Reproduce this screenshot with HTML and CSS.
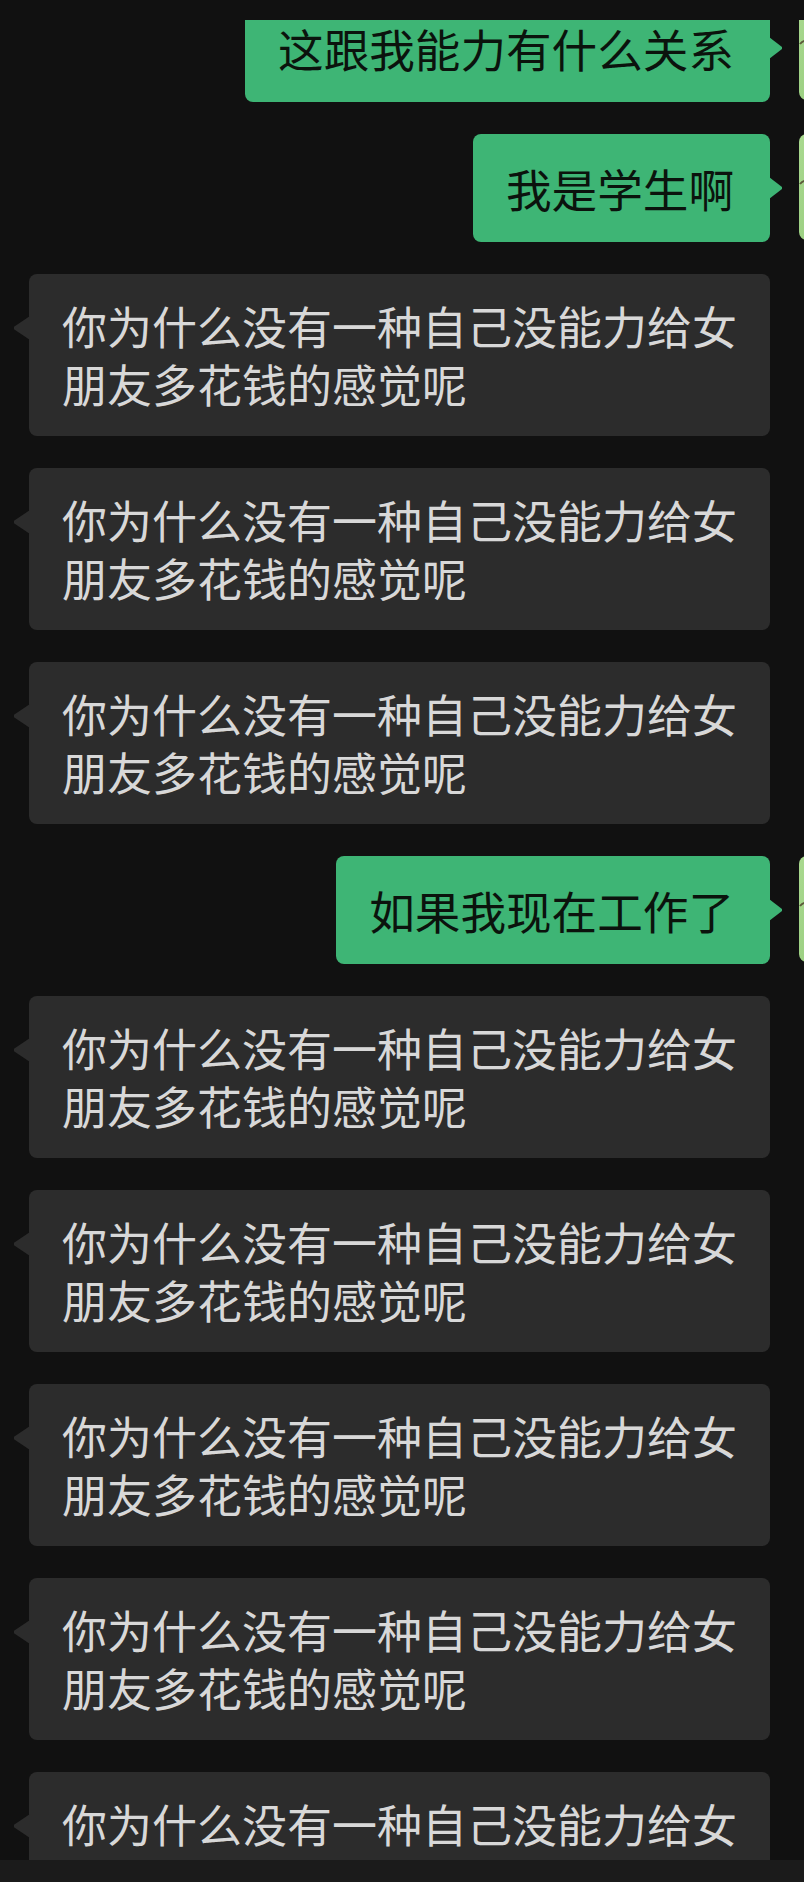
FILE: index.html
```html
<!DOCTYPE html>
<html lang="zh-CN">
<head>
  <meta charset="UTF-8">
  <title>聊天</title>
  <link rel="stylesheet" href="styles.css">
</head>
<body>
  <div class="screen">
    <div class="top-strip"></div>

    <div class="chat">
      <div class="row out first">
        <div class="bubble">这跟我能力有什么关系</div>
        <div class="avatar me">
          <svg width="106" height="106" viewBox="0 0 106 106"><path d="M1 50 q3 -4 7 -3" stroke="#5b5a3a" stroke-width="2" fill="none"/></svg>
        </div>
      </div>

      <div class="row out">
        <div class="bubble">我是学生啊</div>
        <div class="avatar me">
          <svg width="106" height="106" viewBox="0 0 106 106"><path d="M1 50 q3 -4 7 -3" stroke="#5b5a3a" stroke-width="2" fill="none"/></svg>
        </div>
      </div>

      <div class="row in">
        <div class="avatar her"></div>
        <div class="bubble">你为什么没有一种自己没能力给女朋友多花钱的感觉呢</div>
      </div>

      <div class="row in">
        <div class="avatar her"></div>
        <div class="bubble">你为什么没有一种自己没能力给女朋友多花钱的感觉呢</div>
      </div>

      <div class="row in">
        <div class="avatar her"></div>
        <div class="bubble">你为什么没有一种自己没能力给女朋友多花钱的感觉呢</div>
      </div>

      <div class="row out">
        <div class="bubble">如果我现在工作了</div>
        <div class="avatar me">
          <svg width="106" height="106" viewBox="0 0 106 106"><path d="M1 50 q3 -4 7 -3" stroke="#5b5a3a" stroke-width="2" fill="none"/></svg>
        </div>
      </div>

      <div class="row in">
        <div class="avatar her"></div>
        <div class="bubble">你为什么没有一种自己没能力给女朋友多花钱的感觉呢</div>
      </div>

      <div class="row in">
        <div class="avatar her"></div>
        <div class="bubble">你为什么没有一种自己没能力给女朋友多花钱的感觉呢</div>
      </div>

      <div class="row in">
        <div class="avatar her"></div>
        <div class="bubble">你为什么没有一种自己没能力给女朋友多花钱的感觉呢</div>
      </div>

      <div class="row in">
        <div class="avatar her"></div>
        <div class="bubble">你为什么没有一种自己没能力给女朋友多花钱的感觉呢</div>
      </div>

      <div class="row in">
        <div class="avatar her"></div>
        <div class="bubble">你为什么没有一种自己没能力给女朋友多花钱的感觉呢</div>
      </div>
    </div>

    <div class="bottom-bar"></div>
  </div>
</body>
</html>
```

FILE: styles.css
```css
body {
  margin: 0;
  background: #111111;
  font-family: "Noto Sans CJK SC", "Noto Sans", sans-serif;
}

.screen {
  height: 1882px;
  display: flex;
  flex-direction: column;
  overflow: hidden;
}

.top-strip {
  height: 20px;
  flex: none;
  background: #111111;
}

.chat {
  flex: 1;
  overflow: hidden;
  padding: 0 34px 0 29px;
  display: flex;
  flex-direction: column;
  gap: 32px;
}

.bottom-bar {
  height: 22px;
  flex: none;
  background: #1b1b1b;
}

/* 一行消息 */
.row {
  display: flex;
  align-items: flex-start;
  gap: 29px;
  flex: none;
}

.row.out {
  justify-content: flex-end;
  margin-right: -135px;
}

.row.in {
  margin-left: -135px;
}

.row.first {
  margin-top: -26px;
}

.avatar {
  width: 106px;
  height: 106px;
  flex: none;
  border-radius: 8px;
}

.avatar.me {
  background: linear-gradient(135deg, #a9d98f, #92c979);
}

.avatar.her {
  background: #6a6a6a;
}

.bubble {
  position: relative;
  font-size: 45px;
  line-height: 58px;
  border-radius: 8px;
  box-sizing: border-box;
}

.out .bubble {
  background: #3eb575;
  color: #0b130d;
  font-size: 45.6px;
  padding: 25px 36px 25px 33px;
  white-space: nowrap;
}

.first .bubble {
  border-top-left-radius: 0;
  border-top-right-radius: 0;
}

.in .bubble {
  background: #2c2c2c;
  color: #d8d8d8;
  width: 741px;
  padding: 23px 32px 23px 33px;
}

/* 小尖角 */
.bubble::before {
  content: "";
  position: absolute;
  top: 43px;
}

.out .bubble::before {
  right: -12px;
  width: 13px;
  height: 22px;
  background: #3eb575;
  clip-path: polygon(0 0, 100% 45%, 100% 55%, 0 100%);
}

.in .bubble::before {
  top: 42px;
  left: -15px;
  width: 16px;
  height: 24px;
  background: #2c2c2c;
  clip-path: polygon(100% 0, 0 45%, 0 55%, 100% 100%);
}
```
